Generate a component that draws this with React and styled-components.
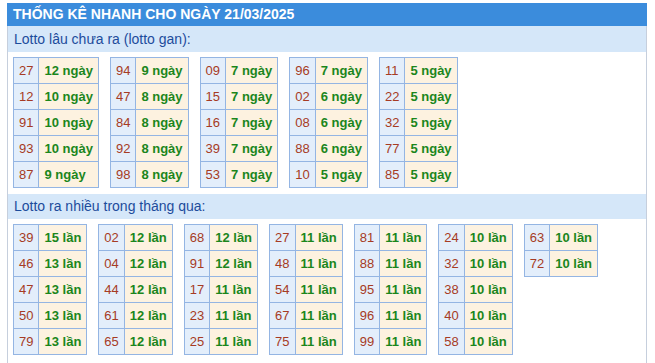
import React from 'react';
import styled, { createGlobalStyle } from 'styled-components';

const GlobalStyle = createGlobalStyle`
  body {
    margin: 0;
    background: #fff;
    font-family: Arial, "Liberation Sans", sans-serif;
  }
`;

const gan = [
  [['27', 12], ['12', 10], ['91', 10], ['93', 10], ['87', 9]],
  [['94', 9], ['47', 8], ['84', 8], ['92', 8], ['98', 8]],
  [['09', 7], ['15', 7], ['16', 7], ['39', 7], ['53', 7]],
  [['96', 7], ['02', 6], ['08', 6], ['88', 6], ['10', 5]],
  [['11', 5], ['22', 5], ['32', 5], ['77', 5], ['85', 5]],
];

const nhieu = [
  [['39', 15], ['46', 13], ['47', 13], ['50', 13], ['79', 13]],
  [['02', 12], ['04', 12], ['44', 12], ['61', 12], ['65', 12]],
  [['68', 12], ['91', 12], ['17', 11], ['23', 11], ['25', 11]],
  [['27', 11], ['48', 11], ['54', 11], ['67', 11], ['75', 11]],
  [['81', 11], ['88', 11], ['95', 11], ['96', 11], ['99', 11]],
  [['24', 10], ['32', 10], ['38', 10], ['40', 10], ['58', 10]],
  [['63', 10], ['72', 10]],
];

const Page = styled.div`
  padding: 3px 0 0 7px;
`;

const Panel = styled.div`
  width: 638px;
  border: 1px solid #c6cfdd;
  border-top: none;
  padding-bottom: 7px;
`;

const Title = styled.div`
  margin: 0 -1px;
  height: 23px;
  line-height: 23px;
  padding-left: 6px;
  background: #3b8cdc;
  color: #fff;
  font-weight: bold;
  font-size: 14px;
`;

const SubTitle = styled.div`
  height: ${p => p.$h}px;
  line-height: ${p => p.$h}px;
  padding-left: 6px;
  background: #d5e7f9;
  color: #1d4c9c;
  font-size: 14px;
`;

const Tables = styled.div`
  display: flex;
  align-items: flex-start;
  gap: 11px;
  padding: 5px 5px 6px;
`;

const Table = styled.table`
  border-collapse: collapse;
  font-size: 13px;
`;

const Cell = styled.td`
  border: 1px solid #94b5e3;
  height: 25px;
  padding: 0 5px;
  line-height: 25px;
  white-space: nowrap;
  background: ${p => (p.$num ? '#e3eefb' : '#fdf2e0')};
  color: ${p => (p.$num ? '#a63b24' : '#1b861c')};
  font-weight: ${p => (p.$num ? 'normal' : 'bold')};
`;

const StatTable = ({ rows, unit }) => (
  <Table>
    <tbody>
      {rows.map(([n, c]) => (
        <tr key={n}>
          <Cell $num>{n}</Cell>
          <Cell>{c} {unit}</Cell>
        </tr>
      ))}
    </tbody>
  </Table>
);

const App = () => (
  <Page>
    <GlobalStyle />
    <Panel>
      <Title>THỐNG KÊ NHANH CHO NGÀY 21/03/2025</Title>
      <SubTitle $h={26}>Lotto lâu chưa ra (lotto gan):</SubTitle>
      <Tables>
        {gan.map((rows, i) => (
          <StatTable key={i} rows={rows} unit="ngày" />
        ))}
      </Tables>
      <SubTitle $h={25}>Lotto ra nhiều trong tháng qua:</SubTitle>
      <Tables>
        {nhieu.map((rows, i) => (
          <StatTable key={i} rows={rows} unit="lần" />
        ))}
      </Tables>
    </Panel>
  </Page>
);

export default App;
